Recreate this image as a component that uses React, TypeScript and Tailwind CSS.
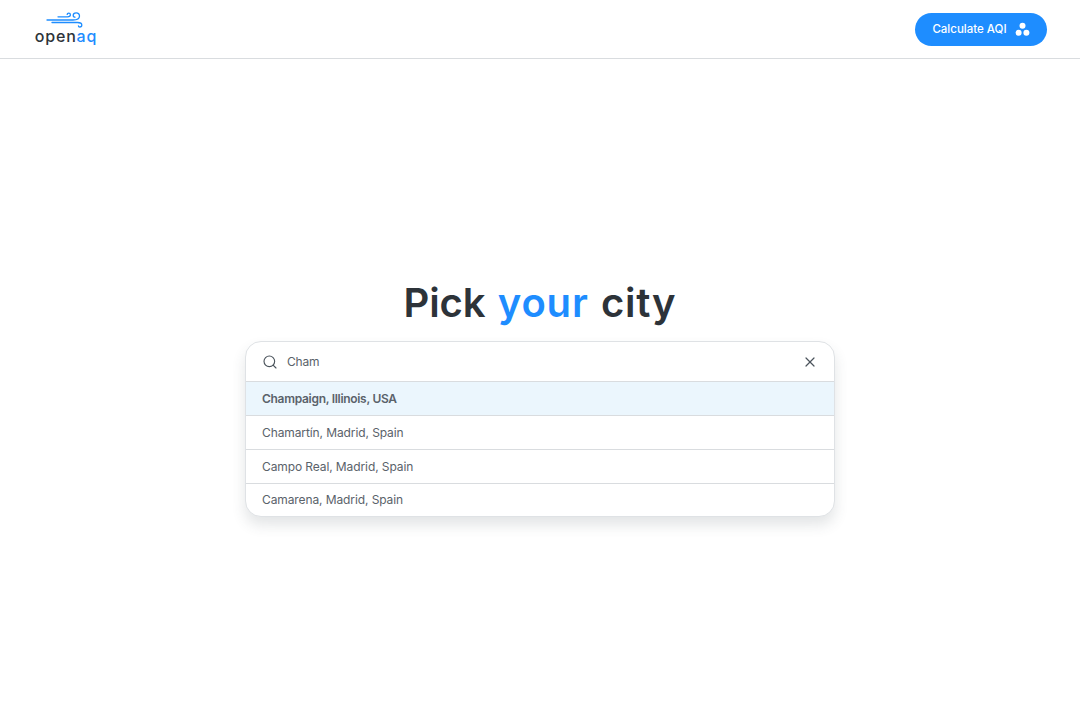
import React from "react";
import { Search, X } from "lucide-react";

const font = { fontFamily: "Inter, 'Noto Sans', sans-serif" };

const results = [
  { name: "Chamartín, Madrid, Spain", cls: "h-[34px] border-b border-[#d9dcdf]" },
  { name: "Campo Real, Madrid, Spain", cls: "h-[34px] border-b border-[#d9dcdf]" },
  { name: "Camarena, Madrid, Spain", cls: "h-[32px]" },
];

function Logo() {
  return (
    <div className="flex flex-col items-center w-[60px] mt-[-1px]">
      <svg width="37" height="16" viewBox="0 0 37 16" fill="none" stroke="#1e8dff" strokeWidth="1.3" strokeLinecap="round" className="ml-[-3px]">
        <path d="M1 8H27C31 8 33.5 6.5 33.5 4C33.5 2 32 .8 30.2 .8C28.4 .8 27.2 2 27.2 3.4C27.2 4.5 28 5.2 29 5.2" />
        <path d="M12 4.8H21.5C23.2 4.8 24.4 3.9 24.4 2.8C24.4 1.8 23.6 1.1 22.7 1.1C21.8 1.1 21.2 1.7 21.2 2.4" />
        <path d="M6 10.5H31.5C34.2 10.5 35.8 11.6 35.8 13C35.8 14.2 34.8 15 33.8 15C33 15 32.4 14.5 32.4 13.8" />
      </svg>
      <span className="text-[16px] leading-[17px] font-medium tracking-[0.8px] text-[#2d3339] whitespace-nowrap">
        open<span className="text-[#1e8dff]">aq</span>
      </span>
    </div>
  );
}

export default function App() {
  return (
    <div style={font} className="min-h-[702px] bg-white flex flex-col">
      <header className="h-[59px] border-b border-[#d9dcdf] flex items-center justify-between pl-[36px] pr-[33px]">
        <Logo />
        <button className="h-[33px] w-[132px] mt-[1px] rounded-full bg-[#1e8dff] text-white text-[11.5px] font-medium flex items-center justify-center gap-[8px]">
          Calculate AQI
          <svg width="15" height="15" viewBox="0 0 15 15" fill="white">
            <circle cx="7.5" cy="3.8" r="3" />
            <circle cx="3.6" cy="10.8" r="3" />
            <circle cx="11.4" cy="10.8" r="3" />
          </svg>
        </button>
      </header>
      <main className="flex flex-col items-center pt-[218px]">
        <h1 className="h-[52px] text-[40px] leading-[52px] font-semibold text-[#2d3339] tracking-[0.8px] [word-spacing:1.5px] whitespace-nowrap">
          <span className="tracking-[-0.1px]">Pick</span> <span className="text-[#1e8dff]">your</span> city
        </h1>
        <div className="mt-[12px] w-[590px] rounded-[16px] bg-white border border-[#dfe2e5] shadow-[0_8px_14px_rgba(60,70,80,0.14)] overflow-hidden text-[12px] text-[#5a626a]">
          <div className="h-[39px] flex items-center justify-between px-[16px]">
            <div className="flex items-center gap-[9px]">
              <Search size={16} strokeWidth={1.7} className="text-[#4b545c]" />
              <span className="tracking-[-0.2px]">Cham</span>
            </div>
            <X size={16} strokeWidth={1.8} className="text-[#4b545c]" />
          </div>
          <div className="h-[35px] flex items-center px-[16px] bg-[#ebf6fd] border-y border-[#d9dcdf] font-semibold tracking-[-0.3px]">
            Champaign, Illinois, USA
          </div>
          {results.map(r => (
            <div key={r.name} className={`flex items-center px-[16px] tracking-[-0.1px] ${r.cls}`}>
              {r.name}
            </div>
          ))}
        </div>
      </main>
    </div>
  );
}
